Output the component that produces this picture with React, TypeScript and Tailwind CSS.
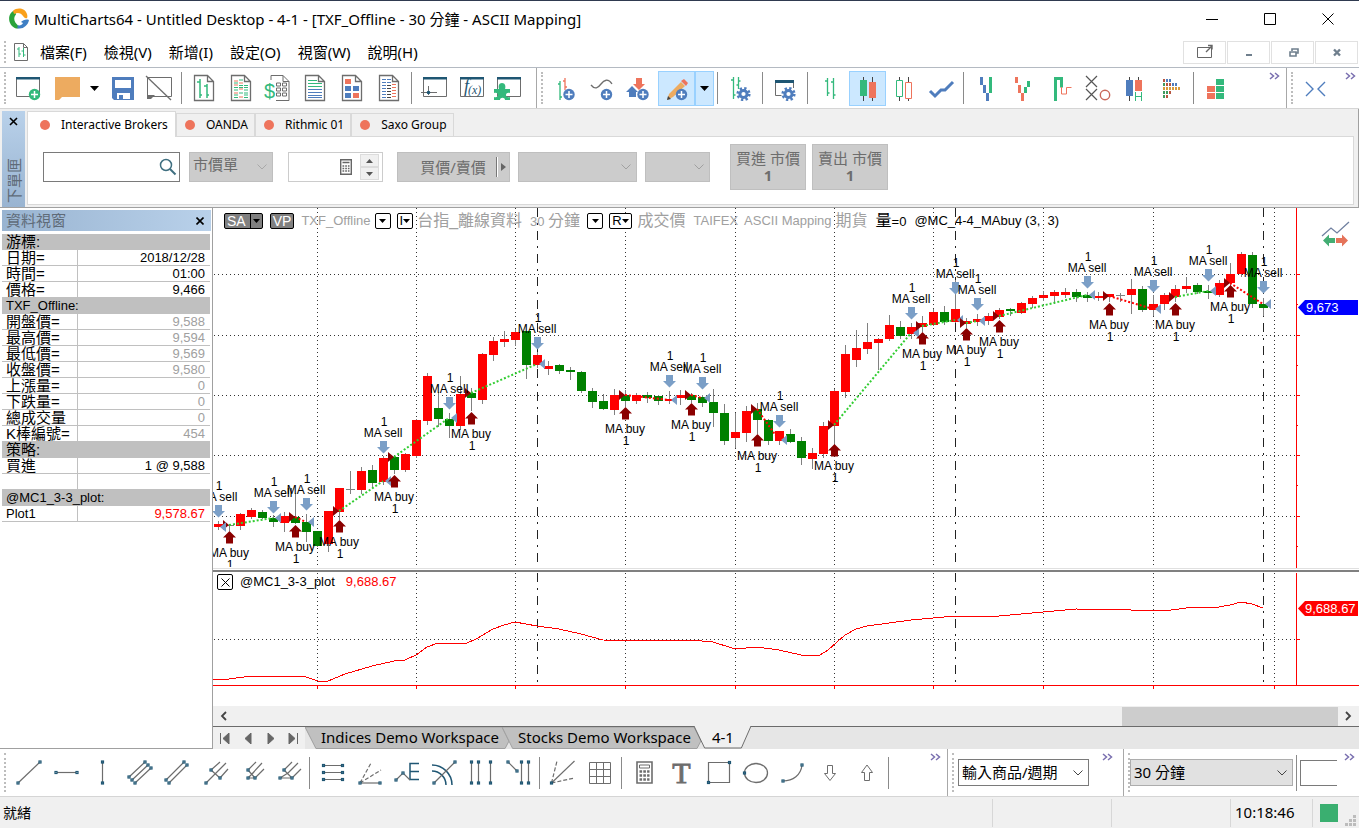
import React from 'react';

const GREEN = '#33b97c';
const RED = '#ee745c';
const BLUE = '#4f7dbd';
const NAVY = '#1f5673';
const GRAY = '#6d6d6d';

interface IconProps {
  children: React.ReactNode;
}

const Icon = ({ children }: IconProps) => (
  <svg className="overflow-visible" width="29" height="27" viewBox="0 0 29 27" fill="none" aria-hidden="true">
    {children}
  </svg>
);

interface ToolProps {
  label: string;
  active?: boolean;
  children: React.ReactNode;
}

const Tool = ({ label, active, children }: ToolProps) => (
  <button
    type="button"
    aria-label={label}
    className={`flex h-[35px] w-[37px] shrink-0 items-center justify-center ${
      active ? 'bg-[#cce8ff] outline outline-1 -outline-offset-1 outline-[#99d1ff]' : ''
    }`}
  >
    <Icon>{children}</Icon>
  </button>
);

const Sep = () => (
  <div className="flex h-8 w-2 shrink-0 pl-[3px]">
    <div className="w-px bg-[#8a8a8a]" />
  </div>
);

const Grip = () => (
  <div className="my-1 ml-1 w-0 shrink-0 self-stretch border-l-2 border-dotted border-[#bdbdbd]" />
);

const More = () => (
  <button
    type="button"
    aria-label="More"
    className="flex h-4 w-4 shrink-0 items-center justify-center self-start"
  >
    <svg width="11" height="8" viewBox="0 0 11 8" fill="none" stroke="#7a70b0" strokeWidth="1.500">
      <path d="M1 1l3.500 3L1 7M6 1l3.500 3L6 7" />
    </svg>
  </button>
);

const Caret = () => (
  <svg width="9" height="5" viewBox="0 0 9 5" aria-hidden="true">
    <path d="M0 0h9L4.500 5z" fill="#000" />
  </svg>
);

const Chevron = ({ color = '#444' }: { color?: string }) => (
  <svg
    className="pointer-events-none absolute top-1/2 right-1.5 -translate-y-1/2"
    width="10"
    height="6"
    viewBox="0 0 10 6"
    fill="none"
    stroke={color}
  >
    <path d="M.5.5L5 5 9.500.5" />
  </svg>
);

// shared icon parts

const Win = ({ x = 2 }: { x?: number }) => (
  <>
    <path d={`M${x + 0.5} 2.5h23v19h-23z`} fill="#fff" stroke={GRAY} />
    <path d={`M${x} 2h24v2.500h-24z`} fill={NAVY} />
  </>
);

const Doc = () => (
  <path d="M4.500.500h13l6 6v19h-19zM17.500.500v6h6" stroke={GRAY} strokeWidth="1.300" />
);

const Plus = ({ x, color = BLUE }: { x: number; color?: string }) => (
  <>
    <circle cx={x} cy="19.500" r="5.700" fill={color} />
    <path d={`M${x - 3.5} 19.5h7M${x} 16v7`} stroke="#fff" strokeWidth="1.500" />
  </>
);

const Gear = () => (
  <>
    <circle cx="17.500" cy="19" r="5.700" stroke={BLUE} strokeWidth="2.800" strokeDasharray="2.240 2.240" />
    <circle cx="17.500" cy="19" r="3.600" stroke={BLUE} strokeWidth="3" />
  </>
);

const Handle = ({ x, y }: { x: number; y: number }) => (
  <rect x={x - 1} y={y - 1} width="2" height="2" fill="#fff" stroke={NAVY} strokeWidth="1.200" />
);

interface LinesProps {
  d: string;
  handles?: number[][];
  dashed?: string;
}

const Lines = ({ d, handles = [], dashed }: LinesProps) => (
  <>
    <path d={d} stroke={GRAY} strokeWidth="1.200" />
    {dashed && <path d={dashed} stroke={GRAY} strokeWidth="1.200" strokeDasharray="4 2" />}
    {handles.map(([x, y]) => (
      <Handle key={`${x}-${y}`} x={x} y={y} />
    ))}
  </>
);

const CalcIcon = () => (
  <svg width="12" height="16" viewBox="0 0 12 16" fill="none">
    <path d="M.7.7h10.600v14.600H.7z" stroke="#666" strokeWidth="1.400" />
    <path d="M2.500 3.500h7" stroke="#666" strokeWidth="1.500" />
    <path d="M2.500 7h7M2.500 9.500h7M2.500 12h7" stroke="#666" strokeWidth="1.500" strokeDasharray="1.700 1" />
  </svg>
);

const TitleBar = () => (
  <header className="flex h-[37px] items-center border-t border-[#2f3a50] bg-white pl-2">
    <svg width="22" height="22" viewBox="0 0 22 22">
      <path d="M7 2C-1 5-1 17 8 20.500c3 .5 4-1 2-3C6 14 5 10 8 6.500z" fill="#2aa33a" />
      <path d="M5 3C9-1 17 0 19 6c.5 2 .5 3 0 4-2 1-3-1-4-2-2-3-5-4-9-2z" fill="#f9a01b" />
      <path d="M21 12c-1 6-7 10-12 8 1-1 1-2 0-3 3 1 5 0 6-2l-2-1c2-2 5-3 8-2z" fill="#3f7fc4" />
    </svg>
    <h1 className="ml-1 flex-1 text-[15px] text-black">
      MultiCharts64 - Untitled Desktop - 4-1 - [TXF_Offline - 30 分鐘 - ASCII Mapping]
    </h1>
    <div className="flex gap-3 pr-2">
      {[
        ['Minimize', 'M0 6.500h12'],
        ['Maximize', 'M.5.5h11v11H.5z'],
        ['Close', 'M.5.5l11 11M11.500.5l-11 11'],
      ].map(([label, d]) => (
        <button key={label} type="button" aria-label={label} className="flex h-8 w-[46px] items-center justify-center">
          <svg width="12" height="12" viewBox="0 0 12 12" fill="none" stroke="#000">
            <path d={d} />
          </svg>
        </button>
      ))}
    </div>
  </header>
);

const MENU = ['檔案(F)', '檢視(V)', '新增(I)', '設定(O)', '視窗(W)', '說明(H)'];

const MenuBar = () => (
  <nav className="flex h-[31px] items-center border-b border-[#b4bac2] bg-white">
    <Grip />
    <svg className="ml-2 shrink-0" width="15" height="19" viewBox="0 0 15 19" fill="none">
      <path d="M.5.5h9l4 4v13H.5zM9.500.5v4h4" stroke={GRAY} />
      <path d="M5 4v10M3 6h2M5 11h2M9.500 5v9M7.500 8h2M9.500 12h2" stroke={GREEN} />
    </svg>
    <div className="flex flex-1 gap-[17px] pl-[11px]">
      {MENU.map((item) => (
        <button key={item} type="button" className="text-[15px] whitespace-nowrap text-black">
          {item}
        </button>
      ))}
    </div>
    <div className="flex gap-px pr-px">
      <button
        type="button"
        aria-label="Detach"
        className="flex h-[23px] w-[43px] items-center justify-center border border-[#e1e1e1]"
      >
        <svg width="18" height="18" viewBox="0 0 18 18" fill="none" stroke="#666">
          <path d="M1.500 4.500h14v10h-14z" />
          <path d="M10 9l6-6M12 2.500h4v4" strokeWidth="1.400" />
        </svg>
      </button>
      {[
        ['Minimize window', 'M6 12h6', 2],
        ['Restore window', 'M8 8V6h6v4h-2M6 9h6v4H6z', 1.6],
        ['Close window', 'M6 6.500l6 6M12 6.500l-6 6', 2.4],
      ].map(([label, d, w]) => (
        <button
          key={label}
          type="button"
          aria-label={String(label)}
          className="flex h-[23px] w-[43px] items-center justify-center border border-[#e1e1e1]"
        >
          <svg width="18" height="18" viewBox="0 0 18 18" fill="none" stroke="#6f7f8d" strokeWidth={w}>
            <path d={String(d)} />
          </svg>
        </button>
      ))}
    </div>
  </nav>
);

const DOT_ROWS = [
  ['#b7553f', '#4f7dbd', '#4f7dbd'],
  ['#3f9a5f', '#b7553f', '#b7553f', '#4f7dbd', '#4f7dbd'],
  ['#d99a3a', '#d99a3a', '#d99a3a', '#d99a3a', '#d99a3a', '#d99a3a'],
  ['#3f9a5f', '#3f9a5f', '#b7553f'],
  ['#3f9a5f', '#b7553f'],
];

const TopToolbar = () => (
  <div className="flex h-[41px] items-center border-b border-[#d5d5d5] bg-white">
    <div className="flex w-[537px] shrink-0 items-center self-stretch border-r border-[#a8a8a8]">
      <Grip />
      <div className="flex items-center pl-1">
        <Tool label="New">
          <Win />
          <Plus x={20.5} color={GREEN} />
        </Tool>
        <Tool label="Open">
          <path d="M4 2h25v20H11l-3 3H4z" fill="#edab60" />
        </Tool>
        <button type="button" aria-label="Open recent" className="flex h-[35px] w-5 items-center justify-center">
          <Caret />
        </button>
        <Tool label="Save">
          <path d="M4 2h22v23H6l-2-2z" fill={BLUE} />
          <path d="M7 5h16v8H7zM9 18h13v6H9z" fill="#fff" />
          <path d="M11 20h4v4h-4z" fill={BLUE} />
        </Tool>
        <Tool label="Close desktop">
          <path d="M2.500 2.500h24v19h-24z" stroke={GRAY} />
          <path d="M2 20h8l-4 4H2z" fill={GRAY} />
          <path d="M1 1l25 24" stroke={GRAY} strokeWidth="1.300" />
        </Tool>
        <Sep />
        <Tool label="New chart">
          <Doc />
          <path d="M10 4v19M7 7h3M10 20h2M17 9v14M14 11h3M17 20h2" stroke={GREEN} strokeWidth="1.500" />
        </Tool>
        <Tool label="New scanner">
          <Doc />
          <path d="M7 6h4M7 10h4M12 14h4M7 18h4M12 22h4M12 8h4" stroke={RED} />
          <path
            d="M12 5h4M12 10.500h4M17 10.500h4M7 8h4M7 12.500h4M12 12.500h4M17 12.500h4M7 15h4M17 15h4M7 20h4M12 18h4M17 18h4M17 20h4M7 22.500h4M17 22.500h4"
            stroke={GREEN}
          />
        </Tool>
        <Tool label="New depth">
          <path d="M7 5V.500h12l6 6v19H12M19 .500v6h6" stroke={GRAY} />
          <path d="M12.500 8h4v3h-4zM18.500 8h4v3h-4zM12.500 13h4v3h-4zM18.500 13h4v3h-4zM12.500 18h4v3h-4zM18.500 18h4v3h-4z" stroke={GRAY} />
          <text x="0" y="23" fontSize="20" fill={GREEN} fontFamily="Liberation Sans">
            $
          </text>
        </Tool>
        <Tool label="New quote list">
          <Doc />
          <path d="M7 5.500h9M7 8.500h14M7 11.500h14" stroke={GREEN} />
          <path d="M7 14.500h14M7 17.500h14M7 20.500h14M7 22.500h14" stroke={BLUE} />
        </Tool>
        <Tool label="New portfolio">
          <Doc />
          <path d="M7 4h6v5H7zM15 18h6v5h-6z" fill={RED} />
          <path d="M7 11h6v5H7zM15 11h6v5h-6zM7 18h6v5H7z" fill={BLUE} />
        </Tool>
        <Tool label="New order list">
          <Doc />
          <path d="M7 4.500h4M7 7.500h4M7 10.500h4M7 13.500h4M7 16.500h4M7 19.500h4M7 22.500h4M12 4.500h4M12 7.500h4" stroke={BLUE} />
          <path d="M17 9.500h4M17 12.500h4M17 15.500h4M17 18.500h4M17 21.500h4" stroke={RED} />
          <path d="M12 10.500h4M12 13.500h4M12 16.500h4M12 19.500h4M12 22.500h4" stroke="#444" />
        </Tool>
        <Sep />
        <Tool label="Order bar">
          <Win x={3} />
          <path d="M1 17.500h16M8.500 11v9" stroke={GRAY} />
          <circle cx="8.500" cy="17.500" r="1.800" fill={NAVY} />
        </Tool>
        <Tool label="Formula">
          <Win x={3} />
          <text x="7" y="17" fontSize="18" fontStyle="italic" fill={NAVY} fontFamily="Liberation Serif">
            f
          </text>
          <text x="11" y="19" fontSize="12" fontStyle="italic" fill={NAVY} fontFamily="Liberation Serif">
            (x)
          </text>
        </Tool>
        <Tool label="Add-ons">
          <Win x={3} />
          <path
            d="M0 14h5c-1-3 0-6 3-6s4 3 3 6h5v4c-3-1-4 1-4 2s1 3 4 2v3h-5c0-3-5-3-5 0H0v-3c3 1 4-1 4-2s-1-3-4-2z"
            fill={GREEN}
          />
        </Tool>
      </div>
    </div>
    <div className="flex min-w-0 flex-1 items-center self-stretch border-r border-[#a8a8a8] pr-1">
      <Grip />
      <div className="flex flex-1 items-center overflow-hidden pl-1">
        <Tool label="Insert symbol">
          <path d="M9 6v19M7 9h2M9 22h2" stroke={GREEN} strokeWidth="1.300" />
          <path d="M14 3v12M14 12h2M12 6h2" stroke={RED} strokeWidth="1.300" />
          <Plus x={18} />
        </Tool>
        <Tool label="Insert indicator">
          <path d="M3 10c4 5 7 3 10-1s7-6 11 0" stroke={GRAY} strokeWidth="1.300" />
          <Plus x={18.5} />
        </Tool>
        <Tool label="Insert signal">
          <path d="M11 3h6v6h3l-6 6-6-6h3z" fill={RED} />
          <path d="M7 11l-6 6h3v5h7v-5h2z" fill={BLUE} />
          <Plus x={18} />
        </Tool>
        <Tool label="Drawing tools" active>
          <path d="M5 25l2-6L19 7l4 4L11 22z" fill="#edab60" />
          <path d="M5 25l1-4 3 3z" fill="#444" />
          <path d="M19 6l3-2 4 4-2 3z" fill={RED} />
          <Plus x={19.5} />
        </Tool>
        <button
          type="button"
          aria-label="Drawing tool list"
          className="flex h-[35px] w-[19px] shrink-0 items-center justify-center bg-[#cce8ff] outline outline-1 -outline-offset-1 outline-[#99d1ff]"
        >
          <Caret />
        </button>
        <Sep />
        <Tool label="Format symbol">
          <path d="M7.500 2v22M5 5h2.500M7.500 20h2M12.500 2v12M10.500 10h2M12.500 6h2" stroke={GREEN} strokeWidth="1.300" />
          <Gear />
        </Tool>
        <Sep />
        <Tool label="Format window">
          <path d="M4.500 7v13.500h6M22.500 7v6" stroke={GRAY} />
          <path d="M4 5h19v3H4z" fill={NAVY} />
          <Gear />
        </Tool>
        <Sep />
        <Tool label="OHLC bars">
          <path d="M11.500 3v18M9 6h2.500M11.500 18h2M17.500 3v21M15 7h2.500M17.500 20h2" stroke={GREEN} strokeWidth="1.300" />
        </Tool>
        <Tool label="Candlesticks" active>
          <path d="M10.500 2v24M19.500 2v24" stroke="#444" />
          <path d="M7 5h7v16H7z" fill={GREEN} />
          <path d="M16 7h7v16h-7z" fill={RED} />
        </Tool>
        <Tool label="Hollow candlesticks">
          <path d="M9.500 2v3M9.500 22v4M18.500 2v5M18.500 23v3" stroke="#444" />
          <path d="M6.500 5.500h6v16h-6z" stroke={GREEN} />
          <path d="M15.500 7.500h6v16h-6z" stroke={RED} />
        </Tool>
        <Tool label="Line on close">
          <path d="M3 16l5 5 6-6h4l8-8" stroke={BLUE} strokeWidth="3" />
        </Tool>
        <Sep />
        <Tool label="Kagi">
          <path d="M8 2h3v8H8zM11 10h3v8h-3zM14 18h3v8h-3z" fill={BLUE} />
          <path d="M17 2h3v16h-3z" fill={GREEN} />
        </Tool>
        <Tool label="Line break">
          <path d="M6 2h3v6H6zM9 10h3v8H9zM12 18h3v8h-3z" fill={RED} />
          <path d="M15 12h3v6h-3zM18 6h3v6h-3z" fill={GREEN} />
        </Tool>
        <Tool label="Step chart">
          <path d="M9.500 26V3.500h6v9" stroke={GREEN} strokeWidth="3" />
          <path d="M15.500 12v7h5v-6.500h5" stroke={RED} />
        </Tool>
        <Tool label="Point and figure">
          <path d="M3 1l11 11M14 1L3 12M3 14l11 11M14 14L3 25" stroke="#555" strokeWidth="1.200" />
          <circle cx="22" cy="20" r="4.700" stroke="#c9685a" strokeWidth="1.400" />
        </Tool>
        <Tool label="Heikin-Ashi">
          <path d="M9.500 2v24M18.500 2v4" stroke="#444" />
          <path d="M6 5h7v16H6z" fill={BLUE} />
          <path d="M15 5h7v11h-7z" fill={RED} />
          <path d="M15.500 17v9M21.500 17v9M15.500 21.500h6" stroke={GREEN} />
        </Tool>
        <Tool label="Market profile">
          {DOT_ROWS.map((row, r) =>
            row.map((color, c) => (
              <rect key={`${r}-${c}`} x={6 + c * 3} y={4 + r * 4} width="2" height="3" fill={color} />
            ))
          )}
        </Tool>
        <Sep />
        <Tool label="Renko">
          <path d="M5 11h8v6H5zM5 18h8v6H5z" fill={RED} />
          <path d="M14 4h8v6h-8zM14 11h8v6h-8zM14 18h8v6h-8z" fill={GREEN} />
        </Tool>
      </div>
      <More />
    </div>
    <div className="flex w-[72px] shrink-0 items-center self-stretch pr-px">
      <Grip />
      <div className="flex flex-1 items-center pl-1">
        <Tool label="Bar spacing">
          <path d="M5 7l7 7-7 7M24 7l-7 7 7 7" stroke={BLUE} strokeWidth="1.400" />
        </Tool>
      </div>
      <More />
    </div>
  </div>
);

const BROKERS = ['Interactive Brokers', 'OANDA', 'Rithmic 01', 'Saxo Group'];

const OrderPanel = () => (
  <section className="flex border-r border-b border-[#a0a0a0] bg-[#f0f0f0] pt-0.5 pl-0.5">
    <div className="flex w-[23px] shrink-0 flex-col items-center justify-between bg-linear-to-b from-[#b9d1ea] to-[#99b4d1] pt-1">
      <button type="button" aria-label="Close order panel" className="p-0.5">
        <svg width="9" height="9" viewBox="0 0 9 9" stroke="#000" strokeWidth="1.600">
          <path d="M1 1l7 7M8 1L1 8" />
        </svg>
      </button>
      <h2 className="rotate-180 pt-1 text-[15px] leading-5 text-[#5f6b78] [text-orientation:sideways] [writing-mode:vertical-rl]">
        下單匣
      </h2>
    </div>
    <div className="flex min-w-0 flex-1 flex-col pr-1 pb-0.5 pl-0.5">
      <div className="flex h-[25px] items-end text-xs">
        {BROKERS.map((name, i) => (
          <button
            key={name}
            type="button"
            className={`flex items-center gap-[11px] border border-b-0 border-[#d9d9d9] text-black ${
              i === 0 ? 'z-10 -mb-px h-[26px] bg-white pr-[7px] pl-3' : 'h-[23px] pr-1.5 pl-2'
            }`}
          >
            <span className="size-[10px] rounded-full bg-[#ee745c]" />
            {name}
          </button>
        ))}
      </div>
      <div className="flex h-[69px] items-start gap-2 border border-[#d9d9d9] bg-white pt-[7px] pl-[15px] text-[15px] text-[#6d6d6d]">
        <div className="relative mt-2 w-[137px]">
          <input type="text" aria-label="Symbol" className="block h-[30px] w-full border border-[#7a7a7a] px-2 text-sm" />
          <svg className="absolute top-1.5 right-[3px]" width="18" height="18" viewBox="0 0 18 18" fill="none" stroke="#3f6f80">
            <circle cx="7" cy="7" r="5.500" strokeWidth="1.500" />
            <path d="M11 11l5.500 5.500" strokeWidth="2" />
          </svg>
        </div>
        <div className="relative mt-2 ml-px w-[84px]">
          <select aria-label="Order type" disabled className="block h-[30px] w-full appearance-none border border-[#bfbfbf] bg-[#ccc] px-[3px] pb-2">
            <option>市價單</option>
          </select>
          <Chevron color="#a8a8a8" />
        </div>
        <div className="mt-2 ml-[7px] flex h-[30px] w-[95px] items-center border border-[#ccc]">
          <input type="text" aria-label="Price" className="w-[51px] min-w-0" />
          <CalcIcon />
          <div className="ml-2 flex flex-col">
            <button type="button" aria-label="Increase" className="flex h-[13px] w-[19px] items-center justify-center border border-[#dcdcdc] bg-[#f0f0f0]">
              <svg width="7" height="4" viewBox="0 0 7 4"><path d="M0 4h7L3.500 0z" fill="#555" /></svg>
            </button>
            <button type="button" aria-label="Decrease" className="flex h-[13px] w-[19px] items-center justify-center border border-[#dcdcdc] bg-[#f0f0f0]">
              <svg width="7" height="4" viewBox="0 0 7 4"><path d="M0 0h7L3.500 4z" fill="#555" /></svg>
            </button>
          </div>
        </div>
        <button type="button" className="mt-2 ml-1.5 flex h-[30px] w-[113px] items-center border border-[#bfbfbf] bg-[#ccc]">
          <span className="flex-1 pl-3">買價/賣價</span>
          <span className="h-5 w-0.5 border-r border-white bg-[#777]" />
          <svg className="mx-[3px]" width="5" height="8" viewBox="0 0 5 8"><path d="M0 0v8l5-4z" fill="#666" /></svg>
        </button>
        <div className="relative mt-2 w-[119px]">
          <select aria-label="Account" disabled className="block h-[30px] w-full appearance-none border border-[#bfbfbf] bg-[#ccc]" />
          <Chevron color="#a0a0a0" />
        </div>
        <div className="relative mt-2 w-[65px]">
          <select aria-label="Quantity" disabled className="block h-[30px] w-full appearance-none border border-[#bfbfbf] bg-[#ccc]" />
          <Chevron color="#a0a0a0" />
        </div>
        <div className="ml-3 flex gap-1.5">
          {['買進 市價', '賣出 市價'].map((label) => (
            <button
              key={label}
              type="button"
              className="flex h-[46px] w-[76px] flex-col items-center justify-center border border-[#bfbfbf] bg-[#ccc] leading-[17px] whitespace-nowrap"
            >
              {label}
              <b>1</b>
            </button>
          ))}
        </div>
      </div>
    </div>
  </section>
);

type DataRow = [label: string, value?: string, tone?: string];

const DATA_ROWS: DataRow[] = [
  ['游標:'],
  ['日期=', '2018/12/28', 'text-black'],
  ['時間=', '01:00', 'text-black'],
  ['價格=', '9,466', 'text-black'],
  ['TXF_Offline:'],
  ['開盤價=', '9,588', 'text-[#a0a0a0]'],
  ['最高價=', '9,594', 'text-[#a0a0a0]'],
  ['最低價=', '9,569', 'text-[#a0a0a0]'],
  ['收盤價=', '9,580', 'text-[#a0a0a0]'],
  ['上漲量=', '0', 'text-[#a0a0a0]'],
  ['下跌量=', '0', 'text-[#a0a0a0]'],
  ['總成交量', '0', 'text-[#a0a0a0]'],
  ['K棒編號=', '454', 'text-[#a0a0a0]'],
  ['策略:'],
  ['買進', '1 @ 9,588', 'text-black'],
  ['', '', ''],
  ['@MC1_3-3_plot:'],
  ['Plot1', '9,578.67', 'text-[#ff0000]'],
];

// Chinese labels run one step larger than the latin ones
const isLatin = (label: string) => /^[@TP]/.test(label);

const DataWindow = () => (
  <aside className="flex w-[213px] shrink-0 flex-col border-r border-b border-[#a0a0a0] bg-white pt-0.5 pl-0.5 font-['Liberation_Sans','Noto_Sans_CJK_TC',sans-serif]">
    <div className="mr-px flex h-[21px] items-center justify-between bg-linear-to-r from-[#99b4d1] to-[#b9d1ea] pr-[5px] pl-1">
      <h2 className="text-[15px] leading-5 text-[#5f6b78]">資料視窗</h2>
      <button type="button" aria-label="Close data window" className="p-0.5">
        <svg width="8" height="8" viewBox="0 0 8 8" stroke="#000" strokeWidth="1.600">
          <path d="M.5.5l7 7M7.500.5l-7 7" />
        </svg>
      </button>
    </div>
    <table className="mt-[3px] w-[208px] table-fixed border-separate border-spacing-0 text-black">
      <colgroup>
        <col className="w-[76px]" />
        <col />
      </colgroup>
      <tbody>
        {DATA_ROWS.map(([label, value, tone], i) =>
          value === undefined ? (
            <tr key={i} className="bg-[#c0c0c0]">
              <th colSpan={2} scope="rowgroup" className="p-0 pl-1 text-left font-normal">
                <div className={`h-4 leading-4 whitespace-nowrap ${isLatin(label) ? 'text-[13px]' : 'text-[15px]'}`}>{label}</div>
              </th>
            </tr>
          ) : (
            <tr key={i}>
              <th scope="row" className="border-r border-b border-[#c0c0c0] p-0 pl-1 text-left font-normal">
                <div className={`h-[15px] leading-[15px] whitespace-nowrap ${isLatin(label) ? 'text-[13px]' : 'text-[15px]'}`}>{label}</div>
              </th>
              <td className="border-b border-[#c0c0c0] p-0 pr-[5px] text-right">
                <div className={`h-[15px] text-[13px] leading-[15px] ${tone}`}>{value}</div>
              </td>
            </tr>
          )
        )}
      </tbody>
    </table>
  </aside>
);

// [high, body top, body bottom, low, direction] in chart units, one bar every 11
const BARS: [number, number, number, number, string][] = [
  [521, 524, 527, 529, 'u'], [524, 525, 526, 530, 'd'], [513, 514, 526, 529, 'u'], [508, 510, 517, 518, 'u'],
  [510, 512, 518, 518, 'g'], [515, 518, 522, 526, 'g'], [512, 516, 523, 531, 'u'], [493, 517, 523, 523, 'g'],
  [514, 522, 532, 541, 'g'], [531, 531, 546, 546, 'g'], [511, 511, 544, 551, 'u'], [488, 488, 512, 519, 'u'],
  [471, 489, 490, 493, 'd'], [467, 471, 490, 493, 'u'], [465, 470, 483, 487, 'g'], [456, 458, 482, 484, 'u'],
  [456, 457, 470, 473, 'g'], [453, 454, 470, 471, 'u'], [419, 420, 456, 457, 'u'], [373, 376, 421, 424, 'u'],
  [392, 408, 419, 426, 'g'], [413, 419, 426, 437, 'g'], [376, 394, 426, 429, 'u'], [388, 393, 398, 410, 'g'],
  [353, 354, 400, 403, 'u'], [337, 341, 355, 360, 'u'], [331, 339, 342, 346, 'u'], [329, 332, 340, 345, 'u'],
  [331, 331, 365, 378, 'g'], [352, 355, 365, 367, 'u'], [361, 366, 369, 374, 'u'], [364, 365, 371, 373, 'g'],
  [367, 370, 372, 379, 'g'], [371, 372, 391, 392, 'g'], [388, 391, 402, 407, 'g'], [394, 401, 409, 409, 'g'],
  [389, 395, 410, 414, 'u'], [390, 395, 401, 406, 'g'], [393, 395, 401, 403, 'u'], [392, 395, 398, 402, 'g'],
  [395, 396, 401, 404, 'g'], [391, 399, 401, 403, 'u'], [390, 395, 398, 404, 'u'], [393, 395, 400, 402, 'g'],
  [395, 397, 403, 406, 'g'], [389, 402, 413, 426, 'g'], [404, 413, 441, 444, 'g'], [413, 432, 438, 447, 'u'],
  [406, 411, 433, 441, 'u'], [403, 409, 420, 433, 'g'], [419, 420, 441, 444, 'g'], [431, 431, 441, 444, 'u'],
  [429, 434, 442, 442, 'g'], [437, 441, 458, 464, 'g'], [448, 453, 459, 468, 'u'], [422, 426, 454, 457, 'u'],
  [389, 391, 426, 445, 'u'], [345, 354, 392, 397, 'u'], [330, 348, 360, 366, 'u'], [323, 342, 349, 353, 'u'],
  [338, 339, 343, 369, 'u'], [315, 325, 339, 340, 'u'], [321, 327, 336, 338, 'g'], [323, 327, 334, 338, 'u'],
  [316, 323, 327, 331, 'u'], [309, 312, 325, 325, 'u'], [306, 312, 322, 324, 'g'], [280, 309, 322, 322, 'u'],
  [318, 321, 324, 327, 'u'], [314, 319, 322, 325, 'u'], [313, 316, 321, 324, 'u'], [308, 310, 317, 318, 'u'],
  [308, 309, 311, 315, 'g'], [302, 303, 313, 313, 'u'], [296, 298, 304, 307, 'u'], [291, 295, 298, 300, 'u'],
  [290, 292, 296, 303, 'u'], [288, 292, 295, 297, 'u'], [289, 292, 297, 301, 'g'], [292, 295, 298, 301, 'g'],
  [292, 296, 298, 300, 'u'], [294, 294, 297, 301, 'u'], [293, 295, 296, 301, 'd'], [279, 289, 295, 313, 'u'],
  [286, 289, 310, 311, 'g'], [295, 304, 310, 315, 'u'], [293, 295, 304, 309, 'u'], [285, 289, 297, 301, 'u'],
  [277, 286, 289, 292, 'u'], [283, 285, 292, 293, 'g'], [285, 291, 293, 298, 'g'], [280, 283, 295, 296, 'u'],
  [263, 274, 283, 285, 'u'], [252, 254, 274, 276, 'u'], [252, 255, 304, 307, 'g'], [298, 304, 308, 315, 'g'],
];

const BAR_COLOR: Record<string, string> = { u: '#ff0000', g: '#008000', d: '#808080' };

const SELLS = [
  [218, 505], [273, 501], [306, 498], [383, 441], [449, 397], [537, 337], [669, 375], [702, 377],
  [779, 415], [911, 307], [955, 282], [977, 298], [1087, 276], [1153, 280], [1208, 269], [1263, 281],
];

const BUYS = [
  [229, 531], [295, 525], [339, 520], [394, 475], [471, 412], [625, 407], [691, 403], [757, 434],
  [834, 444], [922, 332], [966, 328], [999, 320], [1109, 303], [1175, 303], [1230, 285],
];

// entry x/y, exit x/y
const TRADES = [
  [229, 525, 273, 518], [295, 517, 306, 522], [339, 511, 383, 481], [394, 457, 449, 418],
  [471, 393, 537, 364], [625, 395, 669, 400], [691, 395, 702, 398], [757, 409, 779, 440],
  [834, 425, 911, 333], [922, 326, 955, 320], [966, 323, 977, 321], [999, 316, 1087, 295],
  [1109, 296, 1153, 309], [1175, 297, 1208, 291], [1230, 283, 1263, 304],
];

const H_GRID = [274, 335, 395, 455, 516];
const V_GRID = [317, 416, 515, 625, 735, 834, 933, 1043, 1153, 1274];
const SESSIONS = [537, 955, 1263];

const PLOT =
  '213,679 229,679 251,676 262,676 290,676 306,677 318,681 328,681 345,674 372,666 394,661 405,660 416,655 427,647 438,643 449,643 465,644 476,639 493,629 504,625 515,622 526,624 537,626 559,629 581,634 592,637 603,640 650,641 680,640 702,641 713,642 735,649 757,647 779,650 801,655 812,656 820,655 828,650 845,635 856,629 867,626 889,623 911,620 933,618 955,616 977,617 999,616 1021,614 1043,612 1076,609 1131,610 1164,611 1186,608 1219,607 1230,605 1241,602 1252,604 1263,608';

const Chart = () => (
  <svg
    viewBox="213 208 1146 498"
    className="block w-full font-['Liberation_Sans',sans-serif] text-xs"
    role="img"
    aria-label="TXF_Offline"
  >
    <g stroke="#333" strokeDasharray="1 3" shapeRendering="crispEdges">
      {H_GRID.map((y) => (
        <path key={y} d={`M214 ${y + 0.5}H1296`} />
      ))}
      <path d="M214 639.500H1296" />
      {V_GRID.map((x) => (
        <path key={x} d={`M${x + 0.5} 208V568M${x + 0.5} 573V685`} />
      ))}
    </g>
    <g stroke="#222" strokeDasharray="9 6 2 6" shapeRendering="crispEdges">
      {SESSIONS.map((x) => (
        <path key={x} d={`M${x + 0.5} 208V568M${x + 0.5} 573V685`} />
      ))}
    </g>

    <g shapeRendering="crispEdges">
      {BARS.map(([high, top, bottom, low, dir], i) => {
        const x = 218 + i * 11;
        return (
          <g key={x}>
            <rect x={x} y={high} width="1" height={low - high + 1} fill="#808080" />
            <rect x={x - 4} y={top} width="9" height={bottom - top} fill={BAR_COLOR[dir]} />
          </g>
        );
      })}
    </g>

    {TRADES.map(([x1, y1, x2, y2]) => (
      <g key={x1}>
        <path
          d={`M${x1} ${y1}L${x2} ${y2}`}
          stroke={y2 < y1 ? '#32cd32' : '#ff0000'}
          strokeWidth="2"
          strokeDasharray="2 2"
        />
        <path d={`M${x1 - 6} ${y1 - 5}v10l6 -5z`} fill="#8b0000" />
        <path d={`M${x2 + 8} ${y2 - 5}v10l-6 -5z`} fill="#7b9cc4" />
      </g>
    ))}
    <path d="M226 522v10l-6-5z" fill="#7b9cc4" />

    <g textAnchor="middle" fill="#000">
      {SELLS.map(([x, y]) => (
        <g key={x}>
          <path d={`M${x - 3} ${y}h7v6h3l-6.500 6.500l-6.500-6.500h3z`} fill="#7b9fc7" />
          <text x={x} y={y - 4}>MA sell</text>
          <text x={x + 1} y={y - 15}>1</text>
        </g>
      ))}
      {BUYS.map(([x, y]) => (
        <g key={x}>
          <path d={`M${x + 0.5} ${y}l6.500 6.500h-3v6h-7v-6h-3z`} fill="#8b0000" />
          <text x={x} y={y + 26}>MA buy</text>
          <text x={x + 1} y={y + 38}>1</text>
        </g>
      ))}
    </g>

    {/* pane divider */}
    <path d="M213 567h1146v6H213z" fill="#fff" />
    <path d="M213 568.500h1146" stroke="#e0e0e0" />
    <path d="M213 571h1146" stroke="#808080" strokeWidth="2" />

    <polyline points={PLOT} fill="none" stroke="#ff0000" shapeRendering="crispEdges" />

    <g stroke="#ff0000" shapeRendering="crispEdges">
      <path d="M1296.500 208V568M1296.500 573V685.500M213 685.500H1359" />
      {H_GRID.map((y) => (
        <path key={y} d={`M1296 ${y + 0.5}h4M1296 ${y + 30.5}h2`} />
      ))}
      <path d="M1296 639.500h4" />
      {V_GRID.map((x) => (
        <path key={x} d={`M${x + 0.5} 685v4`} />
      ))}
    </g>

    <path d="M1298 307.500l7-7.500h53v15h-53z" fill="#0000ff" />
    <path d="M1298 608.500l7-7.500h53v15h-53z" fill="#ff0000" />
    <g fill="#fff" className="text-[13px]">
      <text x="1306" y="312">9,673</text>
      <text x="1305" y="613">9,688.67</text>
    </g>

    <path d="M1322 236l9-8 6 5 12-11" fill="none" stroke="#7080a0" strokeWidth="1.300" />
    <path d="M1323 240.500l6-6v3.500h6v5h-6v3.500z" fill="#43ad73" />
    <path d="M1348 240.500l-6-6v3.500h-6v5h6v3.500z" fill="#e5735a" />
  </svg>
);

const BoxCaret = ({ letter, label }: { letter?: string; label: string }) => (
  <button
    type="button"
    aria-label={label}
    className="flex h-4 min-w-4 items-center justify-center rounded-[2px] border border-black bg-white px-0.5 text-black"
  >
    {letter}
    <svg width="7" height="4" viewBox="0 0 7 4"><path d="M0 0h7L3.500 4z" fill="#000" /></svg>
  </button>
);

const ChartHeader = () => (
  <div className="absolute top-0 left-0 flex h-[25px] items-center pl-[11px] text-[13px] whitespace-nowrap text-[#a0a0a0]">
    <button type="button" className="flex h-4 items-center rounded-[2px] border border-black bg-[#808080] pl-0.5 text-sm leading-none text-white">
      SA
      <span className="ml-1 flex h-full w-3 items-center justify-center border-l border-black">
        <svg width="7" height="4" viewBox="0 0 7 4"><path d="M0 0h7L3.500 4z" fill="#000" /></svg>
      </span>
    </button>
    <button type="button" className="ml-[7px] flex h-4 items-center rounded-[2px] border border-black bg-[#808080] px-0.5 text-sm leading-none text-white">
      VP
    </button>
    <span className="mr-1 ml-[7px]">TXF_Offline</span>
    <BoxCaret label="Symbol" />
    <span className="w-1.5" />
    <BoxCaret label="Instrument" letter="I" />
    <span className="ml-1 text-base">台指_離線資料</span>
    <span className="mr-[7px] ml-2">
      30 <span className="text-base">分鐘</span>
    </span>
    <BoxCaret label="Resolution" />
    <span className="w-1.5" />
    <BoxCaret label="Style" letter="R" />
    <span className="ml-1.5 text-base">成交價</span>
    <span className="ml-2">TAIFEX</span>
    <span className="ml-1.5">ASCII Mapping</span>
    <span className="ml-1 text-base">期貨</span>
    <span className="ml-2 text-black">
      <span className="text-base">量</span>=0
    </span>
    <span className="ml-2 whitespace-pre text-black">@MC_4-4_MAbuy (3,  3)</span>
  </div>
);

const WORKSPACES = ['Indices Demo Workspace', 'Stocks Demo Workspace'];

const WorkspaceTabs = () => (
  <div className="flex h-[23px] border-t border-[#6b6b6b] bg-[#e6e6e6] text-[15px] leading-4 text-black">
    <div className="flex w-[92px] items-center gap-3 bg-[#f0f0f0] pl-1.5">
      {[
        ['First', 'M1.500 0v11M10 0v11L4 5.500z'],
        ['Previous', 'M9 0v11L3 5.500z'],
        ['Next', 'M3 0v11l6-5.500z'],
        ['Last', 'M1 0v11l6-5.500zM9.500 0v11'],
      ].map(([label, d]) => (
        <button key={label} type="button" aria-label={`${label} workspace`}>
          <svg width="11" height="11" viewBox="0 0 11 11"><path d={d} fill="#666" stroke="#666" /></svg>
        </button>
      ))}
    </div>
    {WORKSPACES.map((name) => (
      <button key={name} type="button" className="relative -mr-[7px] h-[22px] pr-2.5 pb-0.5 pl-4">
        <svg className="absolute inset-0 size-full" viewBox="0 0 205 22" preserveAspectRatio="none">
          <path d="M0 0h198l7 14-4 7.500H11z" fill="#c0c0c0" stroke="#a0a0a0" />
        </svg>
        <span className="relative">{name}</span>
      </button>
    ))}
    <button type="button" className="relative h-[22px] pr-[18px] pb-0.5 pl-[18px]">
      <svg className="absolute -top-px left-0 h-[23px] w-full" viewBox="0 0 60 23" preserveAspectRatio="none">
        <path d="M0 0l11 22h38L59 0z" fill="#f0f0f0" />
        <path d="M0 0l11 22h38L59 0" fill="none" stroke="#6b6b6b" />
      </svg>
      <span className="relative">4-1</span>
    </button>
  </div>
);

const DrawingToolbar = () => (
  <div className="flex h-12 items-center border-b border-[#d5d5d5] bg-white">
    <div className="flex min-w-0 flex-1 items-center self-stretch border-r border-[#a8a8a8]">
      <Grip />
      <div className="flex flex-1 items-center overflow-hidden pl-1">
        <Tool label="Trend line">
          <Lines d="M4 24L26 3" handles={[[4, 24], [26, 3]]} />
        </Tool>
        <Tool label="Horizontal line">
          <Lines d="M4 13.500h21" handles={[[5, 13.5], [26, 13.5]]} />
        </Tool>
        <Tool label="Vertical line">
          <Lines d="M14.500 3v21" handles={[[14.5, 3], [14.5, 24]]} />
        </Tool>
        <Tool label="Parallel lines">
          <Lines d="M4 18L20 3M7 21L23 6M10 24L26 9" handles={[[4, 18], [20, 3], [7, 21], [23, 6], [10, 24], [26, 9]]} />
        </Tool>
        <Tool label="Equidistant channel">
          <Lines d="M4 21L22 3M7 24L25 6" handles={[[4, 21], [22, 3], [7, 24], [25, 6]]} />
        </Tool>
        <Tool label="Andrews pitchfork">
          <Lines d="M7 24L27 4M12 11l9-8M21 19l8-9M12 11l9 8" handles={[[7, 24], [12, 11], [21, 19]]} />
        </Tool>
        <Tool label="Schiff pitchfork">
          <Lines d="M12 11l8-8M15 16L26 4M19 19l9-9M12 19h7M12 11l7 8M12 19l6-6" handles={[[12, 11], [12, 19], [19, 19]]} />
        </Tool>
        <Tool label="Modified pitchfork">
          <Lines d="M11 11l8-8M14 15L25 4M19 19l9-9M7 19h12M11 11l8 8M7 19l8-5" handles={[[11, 11], [7, 19], [19, 19]]} />
        </Tool>
        <Sep />
        <Tool label="Retracement levels">
          <Lines
            d="M5.500 6.500h19M5.500 13.500h19M5.500 20.500h19"
            handles={[[5.5, 6.5], [24.5, 6.5], [5.5, 13.5], [24.5, 13.5], [5.5, 20.5], [24.5, 20.5]]}
          />
        </Tool>
        <Tool label="Fan lines">
          <Lines d="M5 24h21" dashed="M5 24L16 4M5 24L26 11" handles={[[5, 24], [25, 24]]} />
        </Tool>
        <Tool label="Projection levels">
          <path d="M27 4.500h-9v16h9M18 12.500h9" stroke={NAVY} strokeWidth="1.500" />
          <Lines d="M4 21l7-7 7 7" handles={[[4, 21], [11, 14]]} />
        </Tool>
        <Tool label="Arcs">
          <path d="M3 6a20 20 0 0 1 20 20M3 12a14 14 0 0 1 14 14" stroke={NAVY} strokeWidth="1.500" />
          <Lines d="M5 24L26 3" handles={[[5, 24], [26, 3]]} />
        </Tool>
        <Tool label="Time zones">
          <Lines
            d="M5.500 3v21M12.500 3v21M24.500 3v21"
            handles={[[5.5, 3], [5.5, 24], [12.5, 3], [12.5, 24], [24.5, 3], [24.5, 24]]}
          />
        </Tool>
        <Tool label="Time projection">
          <Lines d="M5 3l9 9M18.500 3v21M25.500 3v21" handles={[[5, 3], [14, 12], [18.5, 3], [18.5, 24], [25.5, 3], [25.5, 24]]} />
        </Tool>
        <Sep />
        <Tool label="Gann fan">
          <Lines d="M3.500 24L26.500 2" dashed="M3.500 24L9 2M3.500 24l23-5" handles={[[3.5, 24]]} />
        </Tool>
        <Tool label="Grid">
          <path d="M4.500 3.500h21v21h-21zM11.500 3.500v21M18.500 3.500v21M4.500 10.500h21M4.500 17.500h21" stroke={GRAY} />
        </Tool>
        <Sep />
        <Tool label="Calculator">
          <path d="M7 3h15v21H7z" stroke={GRAY} strokeWidth="1.600" />
          <path d="M9.500 6h10v3h-10z" stroke={GRAY} />
          <path d="M9.500 12.500h10M9.500 16.500h10M9.500 20.500h10" stroke={GRAY} strokeWidth="2.500" strokeDasharray="2.600 1.200" />
        </Tool>
        <Tool label="Text">
          <text x="14.500" y="24" fontSize="30" textAnchor="middle" fill={GRAY} stroke={GRAY} strokeWidth=".9" fontFamily="Liberation Serif">
            T
          </text>
        </Tool>
        <Tool label="Rectangle">
          <Lines d="M4.500 3.500h21v20h-21z" handles={[[25.5, 3.5], [4.5, 23.5]]} />
        </Tool>
        <Tool label="Ellipse">
          <ellipse cx="15" cy="14" rx="11.500" ry="9.500" stroke={GRAY} strokeWidth="1.300" />
          <Handle x={3.5} y={14} />
        </Tool>
        <Tool label="Arc">
          <Lines d="M5 22C15 22 23 16 24 6" handles={[[5, 22], [24, 6]]} />
        </Tool>
        <Tool label="Arrow down">
          <path d="M12.500 6.500h5v8h3l-5.500 7-5.500-7h3z" stroke={GRAY} />
        </Tool>
        <Tool label="Arrow up">
          <path d="M12.500 21.500h5v-8h3L15 6l-5.500 7.500h3z" stroke={GRAY} />
        </Tool>
        <Sep />
      </div>
      <div className="self-stretch pr-1">
        <More />
      </div>
    </div>
    <div className="flex w-[176px] shrink-0 items-center self-stretch border-r border-[#a8a8a8]">
      <Grip />
      <div className="flex-1 pl-1">
        <div className="relative w-[131px]">
          <select aria-label="Symbol and period" className="block h-[27px] w-full appearance-none border border-[#7a7a7a] bg-white pr-4 pl-[3px] text-[15px] text-black">
            <option>輸入商品/週期</option>
          </select>
          <Chevron />
        </div>
      </div>
      <div className="self-stretch pr-2">
        <More />
      </div>
    </div>
    <div className="flex w-[235px] shrink-0 items-center self-stretch">
      <Grip />
      <div className="relative w-[163px]">
        <select aria-label="Resolution" className="block h-[27px] w-full appearance-none border border-[#adadad] bg-[#e1e1e1] pl-[3px] text-[15px] text-black">
          <option>30 分鐘</option>
        </select>
        <Chevron />
      </div>
      <div className="mx-[3px] h-9 w-px bg-[#8a8a8a]" />
      <input type="text" aria-label="Range" className="h-[26px] w-[37px] border border-r-0 border-[#7a7a7a] bg-white" />
      <div className="self-stretch pl-1">
        <More />
      </div>
    </div>
  </div>
);

const StatusBar = () => (
  <footer className="flex h-[31px] items-center bg-[#f0f0f0] text-sm text-black">
    <span className="flex-1 pl-[3px]">就緒</span>
    <span className="h-7 w-[119px] border-l border-[#d7d7d7]" />
    <span className="h-7 w-[119px] border-l border-[#d7d7d7]" />
    <span className="flex h-7 w-[82px] items-center border-l border-[#d7d7d7] pl-1 text-[15px]">10:18:46</span>
    <span className="flex h-7 w-[33px] items-center border-l border-[#d7d7d7] pl-[7px]">
      <span className="h-[18px] w-[18px] bg-[#3aaf70]" />
    </span>
    <svg className="mb-0.5 self-end" width="14" height="12" viewBox="0 0 14 12" fill="#bcbcbc">
      <path d="M8 1h3v3H8zM4 5h3v3H4zM8 5h3v3H8zM0 9h3v3H0zM4 9h3v3H4zM8 9h3v3H8z" />
    </svg>
  </footer>
);

const App = () => (
  <div className="flex min-h-screen w-full flex-col bg-white font-['Noto_Sans','Noto_Sans_CJK_TC',sans-serif]">
    <TitleBar />
    <MenuBar />
    <TopToolbar />
    <OrderPanel />
    <main className="flex flex-1">
      <DataWindow />
      <div className="flex min-w-0 flex-1 flex-col font-['Liberation_Sans','Noto_Sans_CJK_TC',sans-serif]">
        <div className="relative flex-1">
          <Chart />
          <ChartHeader />
          <div className="absolute top-[366px] left-1 flex items-center gap-[7px] text-[13px] leading-4 whitespace-nowrap">
            <button type="button" aria-label="Close plot" className="flex size-4 items-center justify-center rounded-[2px] border border-black bg-white">
              <svg width="9" height="9" viewBox="0 0 9 9" stroke="#000"><path d="M.5.5l8 8M8.500.5l-8 8" /></svg>
            </button>
            <span className="text-black">@MC1_3-3_plot</span>
            <span className="ml-1 text-[#ff0000]">9,688.67</span>
          </div>
        </div>
        <div className="flex h-5 items-center bg-[#f0f0f0]">
          <button type="button" aria-label="Scroll left" className="flex w-5 justify-center">
            <svg width="7" height="10" viewBox="0 0 7 10" fill="none" stroke="#444" strokeWidth="1.800"><path d="M6 1L2 5l4 4" /></svg>
          </button>
          <div className="flex-1" />
          <div className="h-[19px] w-[216px] bg-[#cdcdcd]" />
          <button type="button" aria-label="Scroll right" className="flex w-[21px] justify-center">
            <svg width="7" height="10" viewBox="0 0 7 10" fill="none" stroke="#444" strokeWidth="1.800"><path d="M1 1l4 4-4 4" /></svg>
          </button>
        </div>
        <div className="font-['Noto_Sans',sans-serif]">
          <WorkspaceTabs />
        </div>
      </div>
    </main>
    <DrawingToolbar />
    <StatusBar />
  </div>
);

export default App;
